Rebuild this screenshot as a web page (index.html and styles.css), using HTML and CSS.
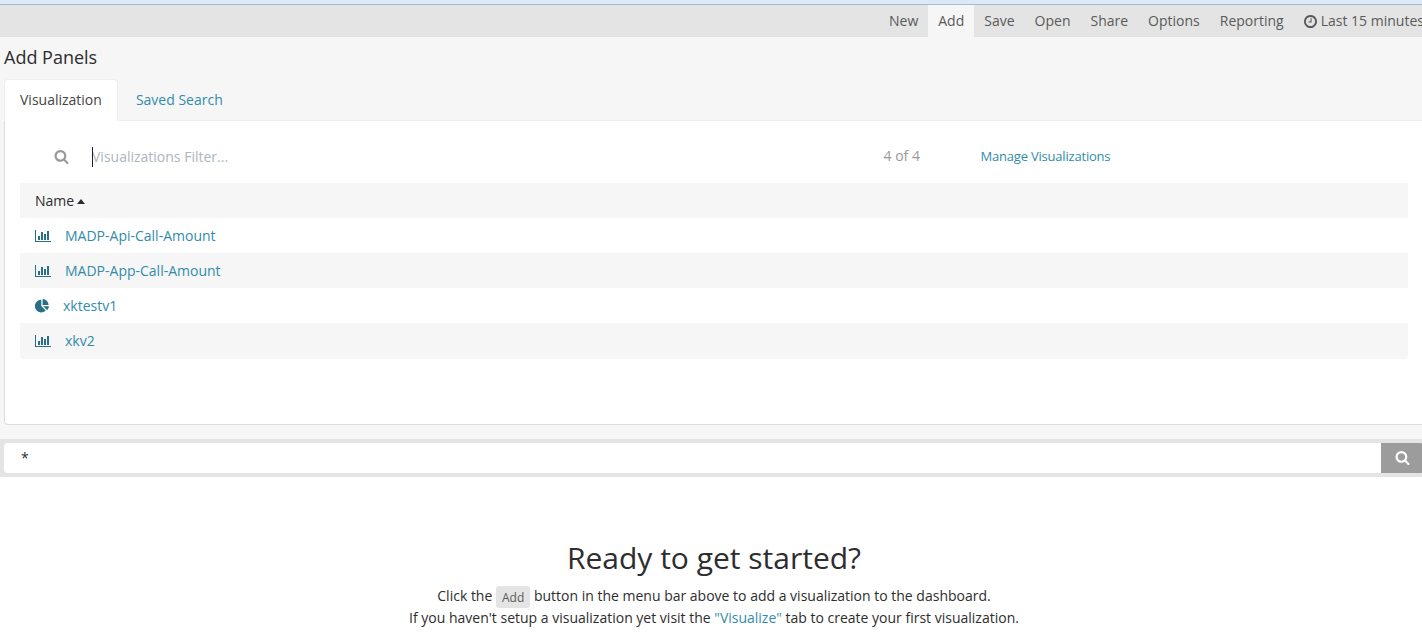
FILE: index.html
```
<!DOCTYPE html>
<html lang="en">
<head>
<meta charset="utf-8">
<title>Dashboard</title>
<link rel="stylesheet" href="styles.css">
</head>
<body>
<svg class="defs" width="0" height="0" aria-hidden="true">
  <symbol id="search" viewBox="0 0 1792 1792"><path d="M1216 832q0-185-131.500-316.500t-316.500-131.500-316.500 131.500-131.500 316.500 131.500 316.500 316.500 131.500 316.500-131.500 131.500-316.500zm512 832q0 52-38 90t-90 38q-54 0-90-38l-343-342q-179 124-399 124-143 0-273.500-55.500t-225-150-150-225-55.500-273.500 55.500-273.500 150-225 225-150 273.500-55.500 273.500 55.500 225 150 150 225 55.500 273.500q0 220-124 399l343 343q37 37 37 90z"/></symbol>
  <symbol id="clock" viewBox="128 128 1536 1536"><path d="M1024 544v448q0 14-9 23t-23 9h-320q-14 0-23-9t-9-23v-64q0-14 9-23t23-9h224v-352q0-14 9-23t23-9h64q14 0 23 9t9 23zm416 352q0-148-73-273t-198-198-273-73-273 73-198 198-73 273 73 273 198 198 273 73 273-73 198-198 73-273zm224 0q0 209-103 385.500t-279.500 279.500-385.500 103-385.500-103-279.500-279.500-103-385.500 103-385.500 279.500-279.500 385.500-103 385.500 103 279.500 279.500 103 385.500z"/></symbol>
  <symbol id="bars" viewBox="0 0 16 12"><path d="M0 0h1v11h15v1H0zM3 6h2v4H3zM6 2h2v8H6zM9 4h2v6H9zM12 1h2v9h-2z"/></symbol>
  <symbol id="pie" viewBox="0 0 14 14"><path d="M6.300 .8v6.300l4.400 4.400A6.300 6.300 0 1 1 6.300 .8zM7.600 0A6.200 6.200 0 0 1 13.600 6H7.600zM8.200 7.200H14A6.200 6.200 0 0 1 12.200 11.200z"/></symbol>
</svg>
<div class="page">
  <div class="chrome-edge"></div>
  <nav class="navbar">
    <a class="nav-item">New</a>
    <a class="nav-item active">Add</a>
    <a class="nav-item">Save</a>
    <a class="nav-item">Open</a>
    <a class="nav-item">Share</a>
    <a class="nav-item">Options</a>
    <a class="nav-item">Reporting</a>
    <a class="nav-item time"><svg class="clock-icon"><use href="#clock"/></svg>Last 15 minutes</a>
  </nav>
  <section class="config">
    <h2 class="config-title">Add Panels</h2>
    <div class="tabs">
      <a class="tab selected">Visualization</a>
      <a class="tab">Saved Search</a>
    </div>
    <div class="panel">
      <div class="filter">
        <svg class="filter-icon"><use href="#search"/></svg>
        <div class="filter-input"><span class="caret"></span>Visualizations Filter...</div>
        <span class="count">4 of 4</span>
        <a class="manage">Manage Visualizations</a>
      </div>
      <div class="list">
        <div class="row head">Name<span class="sort"></span></div>
        <div class="row"><svg class="bar-icon"><use href="#bars"/></svg><a>MADP-Api-Call-Amount</a></div>
        <div class="row shaded"><svg class="bar-icon"><use href="#bars"/></svg><a>MADP-App-Call-Amount</a></div>
        <div class="row"><svg class="pie-icon"><use href="#pie"/></svg><a>xktestv1</a></div>
        <div class="row shaded last"><svg class="bar-icon"><use href="#bars"/></svg><a>xkv2</a></div>
      </div>
    </div>
  </section>
  <div class="querybar">
    <div class="query">*</div>
    <div class="query-button"><svg class="query-icon"><use href="#search"/></svg></div>
  </div>
  <main class="intro">
    <h1 class="intro-title">Ready to get started?</h1>
    <p class="intro-line">Click the <span class="chip">Add</span> button in the menu bar above to add a visualization to the dashboard.</p>
    <p class="intro-line">If you haven't setup a visualization yet visit the <a>"Visualize"</a> tab to create your first visualization.</p>
  </main>
</div>
</body>
</html>
```
FILE: styles.css
```
* { box-sizing: border-box; }
html, body { margin: 0; height: 642px; overflow: hidden; }
body {
  background: #fff;
  color: #2d2d2d;
  font: 14px/20px "Open Sans", "Noto Sans", sans-serif;
}
.defs { position: absolute; }
svg { fill: currentColor; flex: none; }
a { color: #328caa; }
.page { width: 1428px; }
.chrome-edge { height: 5px; background: #dae8f8; border-bottom: 1px solid #a5bbd5; }
.navbar { display: flex; height: 32px; padding-left: 879px; background: #e4e4e4; white-space: nowrap; }
.nav-item { padding: 6px 10px; color: #5a5a5a; }
.nav-item.active { background: #f6f6f6; }
.time { display: flex; align-items: center; }
.clock-icon { width: 13px; height: 13px; margin-right: 4px; }
.config { height: 402px; padding: 8px 0 0 4px; background: #f6f6f6; }
.config-title { margin: 0; font-size: 18px; line-height: 24px; font-weight: 400; }
.tabs { display: flex; height: 42px; margin-top: 10px; gap: 2px; border-bottom: 1px solid #ecf0f1; }
.tab { height: 42px; padding: 10px 15px; border: 1px solid transparent; border-bottom: 0; border-radius: 4px 4px 0 0; }
.tab.selected { background: #fff; border-color: #ecf0f1; color: #444; }
.panel { height: 304px; padding: 15px; border: 1px solid #dcdcdc; border-top: 0; border-radius: 0 0 4px 4px; background: #fff; }
.filter { display: flex; align-items: center; height: 42px; padding-left: 34px; }
.filter-icon { width: 15px; height: 15px; margin-bottom: 1px; color: #999; }
.filter-input { position: relative; width: 791.5px; margin-left: 23px; color: #acb6c0; }
.caret { position: absolute; left: 0; top: 0; width: 1px; height: 20px; background: #222; }
.count { width: 97px; margin-bottom: 2px; color: #999; }
.manage { margin-bottom: 2px; font-size: 13px; letter-spacing: -0.2px; }
.list { margin-top: 5px; width: 1388px; }
.row { display: flex; align-items: center; height: 35px; padding-left: 15px; }
.head, .shaded { background: #f6f6f6; }
.last { height: 36px; border-radius: 0 0 4px 4px; }
.sort { margin: 1px 0 0 3px; border: 4.5px solid transparent; border-top: 0; border-bottom: 5px solid #2d2d2d; }
.bar-icon { width: 16px; height: 12px; margin-right: 14px; color: #286f87; }
.pie-icon { width: 14px; height: 14px; margin-right: 14px; color: #286f87; }
.querybar { display: flex; height: 38px; padding: 4px 0 4px 4px; background: #e4e4e4; }
.query { width: 1377px; padding: 5px 17px; background: #fff; border-radius: 4px 0 0 4px; }
.query-button { display: flex; align-items: center; padding-left: 14px; width: 43px; border-radius: 0 4px 4px 0; background: #9c9c9c; color: #fff; }
.query-icon { width: 15px; height: 15px; margin-bottom: 1px; }
.intro { padding-top: 64px; text-align: center; }
.intro-title { margin: 0 0 10px; font-size: 30px; line-height: 34px; font-weight: 400; }
.intro-line { margin: 0; height: 22px; line-height: 22px; white-space: nowrap; }
.chip { display: inline-block; height: 22px; margin-top: 1px; padding: 1px 6px 0; border-radius: 3px; background: #e4e4e4; color: #5a5a5a; font-size: 12px; line-height: 21px; vertical-align: top; }
```
